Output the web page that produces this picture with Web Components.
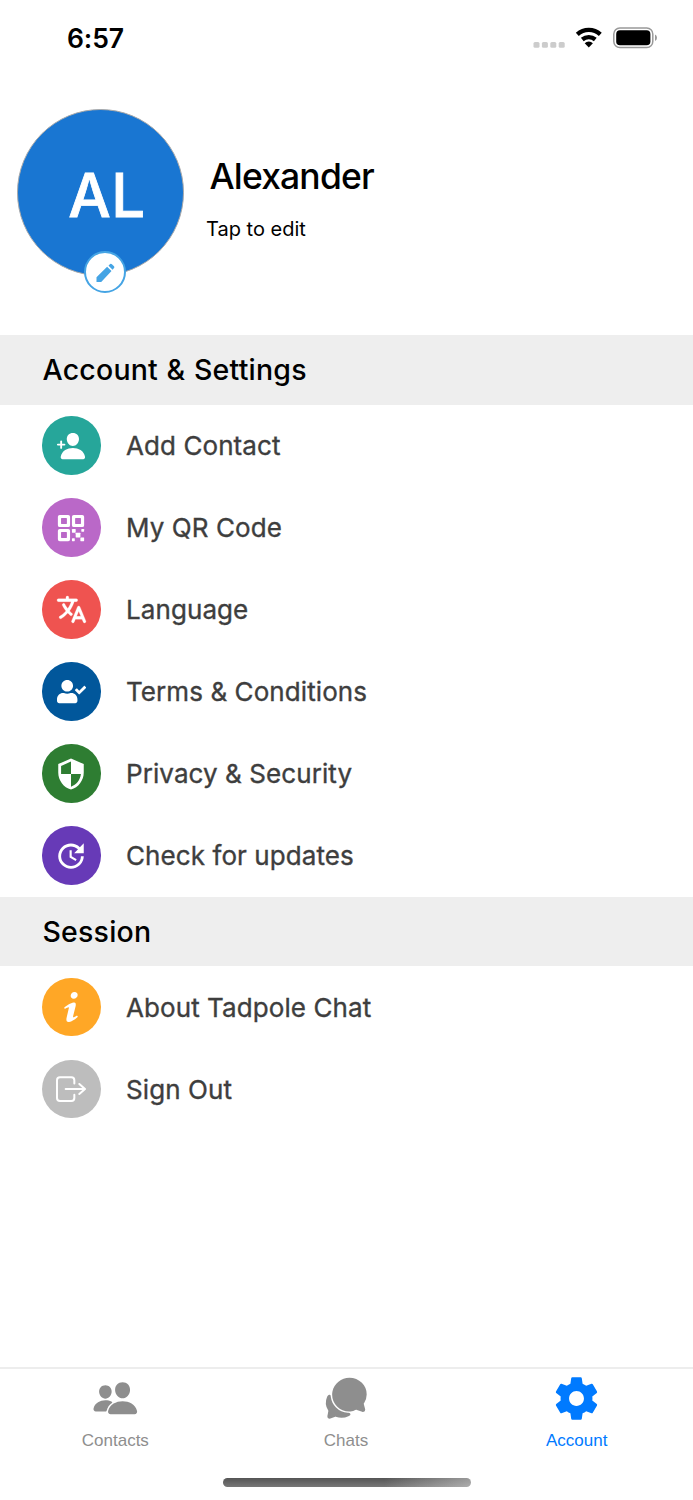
<!DOCTYPE html>
<html lang="en">
<head>
<meta charset="utf-8">
<title>Account</title>
<style>
html,body{margin:0;background:#fff}
body{font-family:Inter,"Liberation Sans",sans-serif;height:1500px;overflow:hidden}
</style>
</head>
<body>
<account-screen></account-screen>
<script>
const ICONS = {
  add: ['0 0 512 512', '<path d="M288 256c52.79 0 99.43-49.71 104-110.82 2.27-30.7-7.36-59.33-27.12-80.6C345.33 43.57 318 32 288 32c-30.24 0-57.59 11.5-77 32.38-19.63 21.11-29.2 49.8-27 80.78C188.49 206.28 235.12 256 288 256zM495.38 439.76c-8.44-46.82-34.79-86.15-76.19-113.75C382.42 301.5 335.83 288 288 288s-94.42 13.5-131.19 38c-41.4 27.6-67.75 66.93-76.19 113.75-1.93 10.73.69 21.34 7.19 29.11A30.94 30.94 0 00112 480h352a30.94 30.94 0 0024.21-11.13c6.48-7.77 9.1-18.38 7.17-29.11zM104 288v-40h40a16 16 0 000-32h-40v-40a16 16 0 00-32 0v40H32a16 16 0 000 32h40v40a16 16 0 0032 0z"/>'],
  qr: ['0 0 512 512', '<rect x="336" y="336" width="80" height="80" rx="8"/><rect x="272" y="272" width="64" height="64" rx="8"/><rect x="416" y="416" width="64" height="64" rx="8"/><rect x="432" y="272" width="48" height="48" rx="8"/><rect x="272" y="432" width="48" height="48" rx="8"/><path id="q" fill-rule="evenodd" d="M448 32H304a32 32 0 00-32 32v144a32 32 0 0032 32h144a32 32 0 0032-32V64a32 32 0 00-32-32zM334 86h84a8 8 0 018 8v84a8 8 0 01-8 8h-84a8 8 0 01-8-8v-84a8 8 0 018-8z"/><use href="#q" x="-240"/><use href="#q" x="-240" y="240"/>'],
  language: ['0 0 512 512', '<path d="M478.33 433.6l-90-218a22 22 0 00-40.67 0l-90 218a22 22 0 1040.67 16.79L316.66 406h102.67l18.33 44.39A22 22 0 00458 464a22 22 0 0020.32-30.4zM334.83 362L368 281.65 401.17 362zM267.84 342.92a22 22 0 00-4.89-30.7c-.2-.15-15-11.13-36.49-34.73 39.65-53.68 62.11-114.75 71.27-143.49H330a22 22 0 000-44H214V70a22 22 0 00-44 0v20H54a22 22 0 000 44h197.25c-9.52 26.95-27.05 69.5-53.79 108.36-31.41-41.68-43.08-68.65-43.17-68.87a22 22 0 00-40.58 17c.58 1.38 14.55 34.23 52.86 83.93.92 1.19 1.83 2.35 2.74 3.51-39.24 44.35-77.74 71.86-93.85 80.74a22 22 0 1021.07 38.63c2.16-1.18 48.6-26.89 101.63-85.59 22.52 24.08 38 35.44 38.93 36.1a22 22 0 0030.75-4.9z" stroke="currentColor" stroke-width="4"/>'],
  terms: ['0 0 640 512', '<path d="M224 256c70.7 0 128-57.3 128-128S294.7 0 224 0 96 57.3 96 128s57.3 128 128 128zm89.6 32h-16.7c-22.2 10.2-46.9 16-72.9 16s-50.6-5.8-72.9-16h-16.7C60.2 288 0 348.2 0 422.4V464c0 26.5 21.5 48 48 48h352c26.5 0 48-21.5 48-48v-41.6c0-74.2-60.2-134.4-134.4-134.4zm323-128.4l-27.8-28.1c-4.6-4.7-12.1-4.7-16.8-.1l-104.8 104-45.5-45.8c-4.6-4.7-12.1-4.7-16.8-.1l-28.1 27.9c-4.7 4.6-4.7 12.1-.1 16.8l81.7 82.3c4.6 4.7 12.1 4.7 16.8.1l141.3-140.2c4.6-4.7 4.7-12.2.1-16.8z"/>'],
  shield: ['0 0 24 24', '<path fill-rule="evenodd" d="M12,12H19C18.47,16.11 15.72,19.78 12,20.92V12H5V6.3L12,3.19M12,1L3,5V11C3,16.55 6.84,21.73 12,23C17.16,21.73 21,16.55 21,11V5L12,1Z"/>'],
  update: ['0 0 24 24', '<path d="M21,10.12H14.22L16.96,7.3C14.23,4.6 9.81,4.5 7.08,7.2C4.35,9.91 4.35,14.28 7.08,17C9.81,19.7 14.23,19.7 16.96,17C18.32,15.65 19,14.08 19,12.1H21C21,14.08 20.12,16.65 18.36,18.39C14.85,21.87 9.15,21.87 5.64,18.39C2.14,14.92 2.11,9.28 5.62,5.81C9.13,2.34 14.76,2.34 18.27,5.81L21,3V10.12M12.5,8V12.25L16,14.33L15.28,15.54L11,13V8H12.5Z"/>'],
  info: ['0 0 20 20', '<path d="M12.432 0c1.34 0 2.01.912 2.01 1.957 0 1.305-1.164 2.512-2.679 2.512-1.269 0-2.009-.75-1.974-1.99C9.789 1.436 10.67 0 12.432 0zM8.309 20c-1.058 0-1.833-.652-1.093-3.524l1.214-5.092c.211-.814.246-1.141 0-1.141-.317 0-1.689.562-2.502 1.117l-.528-.88c2.572-2.186 5.531-3.467 6.801-3.467 1.057 0 1.233 1.273.705 3.23l-1.391 5.352c-.246.945-.141 1.271.106 1.271.317 0 1.357-.392 2.379-1.207l.6.814C12.098 19.02 9.365 20 8.309 20z"/>'],
  exit: ['0 0 90 90', '<path fill="none" stroke="currentColor" stroke-width="6" stroke-linecap="round" stroke-linejoin="round" d="M55 28.500V19Q55 9.500 46 9.500H12Q3 9.500 3 19V72Q3 81 12 81H46Q55 81 55 72V62M70 30L87 45L70 60M29 45H86"/>'],
  people: ['0 0 512 512', '<path d="M336 256c-20.56 0-40.44-9.18-56-25.84-15.13-16.25-24.37-37.92-26-61-1.74-24.62 5.77-47.26 21.14-63.76S312 80 336 80c23.83 0 45.38 9.06 60.7 25.52 15.47 16.62 23 39.22 21.26 63.63-1.67 23.11-10.9 44.77-26 61C376.44 246.82 356.57 256 336 256zM467.83 432H204.18a27.71 27.71 0 01-22-10.67 30.22 30.22 0 01-5.26-25.79c8.42-33.81 29.28-61.85 60.32-81.08C264.79 297.4 299.86 288 336 288c36.85 0 71 9 98.71 26.05 31.11 19.13 52 47.33 60.38 81.55a30.27 30.27 0 01-5.32 25.78A27.68 27.68 0 01467.83 432zM147 260c-35.19 0-66.13-32.72-69-72.93-1.42-20.6 5-39.65 18-53.62 12.86-13.83 31-21.45 51-21.45s38 7.66 50.93 21.57c13.1 14.08 19.5 33.09 18 53.52-2.87 40.2-33.8 72.91-68.93 72.91zM212.66 291.45c-17.59-8.6-40.42-12.9-65.65-12.9-29.46 0-58.07 7.68-80.57 21.62-25.51 15.83-42.67 38.88-49.6 66.71a27.39 27.39 0 004.79 23.36A25.32 25.32 0 0041.72 400h111a8 8 0 007.87-6.57c.11-.63.25-1.26.41-1.88 8.48-34.06 28.35-62.84 57.71-83.82a8 8 0 00-.63-13.39c-1.57-.92-3.37-1.89-5.42-2.89z"/>'],
  chats: ['0 0 512 512', '<path d="M439.9 405.6a26.77 26.77 0 01-9.59-2l-56.78-20.13-.42-.17a9.88 9.88 0 00-3.91-.76 10.32 10.32 0 00-3.62.66c-1.38.52-13.81 5.19-26.85 8.77-7.07 1.94-31.68 8.27-51.43 8.27-50.48 0-97.68-19.4-132.89-54.63A183.38 183.38 0 01100.3 215.1a175.9 175.9 0 014.06-37.58c8.79-40.62 32.07-77.57 65.55-104A194.76 194.76 0 01290.3 30c52.21 0 100.86 20 137 56.18 34.16 34.27 52.88 79.33 52.73 126.87a177.86 177.86 0 01-30.3 99.15l-.19.28-.74 1c-.17.23-.34.45-.5.68l-.15.27a21.63 21.63 0 00-1.08 2.09l15.74 55.94a26.42 26.42 0 011.12 7.11 24 24 0 01-24.03 26.03z"/><path d="M299.87 425.39a15.74 15.74 0 00-10.29-8.1c-5.78-1.53-12.52-1.27-17.67-1.65a201.78 201.78 0 01-128.82-58.75A199.21 199.21 0 0186.4 244.16C85 234.42 85 232 85 232a16 16 0 00-28-10.58s-7.88 8.58-11.6 17.19a162.09 162.09 0 0011 150.06C59 393 59 395 58.42 399.5c-2.73 14.11-7.51 39-10 51.91a24 24 0 008 22.92l.46.39A24.34 24.34 0 0072 480a23.42 23.42 0 009-1.79l53.51-20.65a8.05 8.05 0 015.72 0c21.07 7.84 43 12 63.78 12a176 176 0 0074.91-16.66c5.46-2.56 14-5.34 19-11.12a15 15 0 001.95-16.39z"/>'],
  gear: ['0 0 24 24', '<path d="M19.43 12.98c.04-.32.07-.64.07-.98s-.03-.66-.07-.98l2.11-1.65c.19-.15.24-.42.12-.64l-2-3.46c-.12-.22-.39-.3-.61-.22l-2.49 1c-.52-.4-1.08-.73-1.69-.98l-.38-2.65C14.46 2.18 14.25 2 14 2h-4c-.25 0-.46.18-.49.42l-.38 2.65c-.61.25-1.17.59-1.69.98l-2.49-1c-.23-.09-.49 0-.61.22l-2 3.46c-.13.22-.07.49.12.64l2.11 1.65c-.04.32-.07.65-.07.98s.03.66.07.98l-2.11 1.65c-.19.15-.24.42-.12.64l2 3.46c.12.22.39.3.61.22l2.49-1c.52.4 1.08.73 1.69.98l.38 2.65c.03.24.24.42.49.42h4c.25 0 .46-.18.49-.42l.38-2.65c.61-.25 1.17-.59 1.69-.98l2.49 1c.23.09.49 0 .61-.22l2-3.46c.12-.22.07-.49-.12-.64l-2.11-1.65zM12 15.5c-1.93 0-3.5-1.57-3.5-3.5s1.57-3.5 3.5-3.5 3.5 1.57 3.5 3.5-1.57 3.5-3.5 3.5z"/>'],
  pencil: ['0 0 24 24', '<path d="M3.500 21.900V17.200L14.100 6.800L18.500 11.100L8.200 21.900ZM15.500 5.700L17.100 4.100Q18 3.300 18.900 4.200L21 6.300Q21.900 7.200 21 8.100L19.600 9.700Z"/>']
};
const define = (name, html, fill) => customElements.define(name, class extends HTMLElement {
  constructor() {
    super();
    const t = document.createElement('template');
    t.innerHTML = html;
    this.attachShadow({mode: 'open'}).append(t.content.cloneNode(true));
  }
  connectedCallback() { if (fill) fill(this, this.shadowRoot); }
});

define('ui-icon', '<style>:host{display:block;flex:none}svg{display:block;width:100%;height:100%;fill:currentColor}</style><svg></svg>', (el, root) => {
  const [box, art] = ICONS[el.getAttribute('name')];
  const svg = root.querySelector('svg');
  svg.setAttribute('viewBox', box);
  svg.innerHTML = art;
  const size = el.getAttribute('size');
  el.style.width = el.style.height = size + 'px';
});

define('status-bar', `<style>
:host{display:flex;justify-content:space-between;height:76px;box-sizing:border-box;padding:0 36px 0 67px}
time{font-size:26.5px;font-weight:600;line-height:76px;letter-spacing:-.1px}
svg{display:block;margin-top:20px}
</style><time>6:57</time>
<svg width="126" height="36" viewBox="531 20 126 36">
<g fill="#ccc"><rect x="533.500" y="42" width="6" height="5.800" rx="1.500"/><rect x="541.900" y="42" width="6" height="5.800" rx="1.500"/><rect x="550.300" y="42" width="6" height="5.800" rx="1.500"/><rect x="558.700" y="42" width="6" height="5.800" rx="1.500"/></g>
<g fill="none" stroke="#000" stroke-width="4.300"><path d="M577.300 34.300A17 17 0 01600.300 34.300"/><path d="M582.300 39.500A10 10 0 01595.300 39.500"/></g>
<path d="M588.800 47.500l-4.100-4.300a6 6 0 018.200 0z"/>
<rect x="613.800" y="28" width="39" height="19.500" rx="6" fill="none" stroke="#999" stroke-width="1.500"/>
<rect x="616.200" y="30.300" width="34.200" height="14.900" rx="3.800"/>
<path d="M655 34.500q2 1 2 3.300t-2 3.300z" fill="#999"/>
</svg>`);

define('profile-header', `<style>
:host{display:flex;height:259px;box-sizing:border-box;padding:33px 0 0 17px}
.avatar{position:relative;width:167px;height:167px;box-sizing:border-box;border:1px solid #aaa;border-radius:50%;background:#1976d2;color:#fff;display:flex;align-items:center;justify-content:center;font-size:60px;font-weight:500;line-height:1;letter-spacing:.5px;-webkit-text-stroke:.8px #fff}
.avatar span{margin:4px 0 0 13px}
.edit{position:absolute;left:66px;top:141px;width:42px;height:42px;box-sizing:border-box;border:2px solid #45a4e4;border-radius:50%;background:#fff;color:#45a4e4;display:flex;align-items:center;justify-content:center}
.text{margin:45px 0 0 22px}
h1{margin:0 0 0 3.500px;font-size:35.500px;line-height:46px;font-weight:500;letter-spacing:-.85px}
p{margin:16px 0 0;font-size:20px;line-height:26px}
</style><div class="avatar"><span><slot name="initials"></slot></span><div class="edit"><ui-icon name="pencil" size="24"></ui-icon></div></div>
<div class="text"><h1><slot name="name"></slot></h1><p><slot></slot></p></div>`);

define('section-title', `<style>
:host{display:block;height:69.500px;background:#eee;padding-left:42.500px;font-size:28.500px;font-weight:500;line-height:70px;letter-spacing:.2px;word-spacing:.8px}
</style><slot></slot>`);

define('menu-row', `<style>
:host{display:flex;align-items:center;height:82px;padding-left:42px;gap:25.500px;color:#3e3e3e;font-size:26px;font-weight:400;letter-spacing:.08px;-webkit-text-stroke:.35px #3e3e3e;white-space:nowrap}
.dot{width:58.500px;height:58.500px;border-radius:50%;color:#fff;display:flex;align-items:center;justify-content:center;flex:none}
</style><div class="dot"></div><span><slot></slot></span>`, (el, root) => {
  const dot = root.querySelector('.dot');
  dot.style.background = el.getAttribute('color');
  dot.innerHTML = '<ui-icon name="' + el.getAttribute('icon') + '" size="' + (el.getAttribute('size') || 30) + '"></ui-icon>';
});

define('tab-item', `<style>
:host{flex:1;display:flex;flex-direction:column;align-items:center;color:#8e8e8e;font:17px/20px "Liberation Sans",Arial,sans-serif}
:host([active]){color:#007aff}
.icon{height:58px;display:flex;align-items:center;margin-bottom:4px}
</style><div class="icon"></div><span><slot></slot></span>`, (el, root) => {
  root.querySelector('.icon').innerHTML = '<ui-icon name="' + el.getAttribute('icon') + '" size="' + el.getAttribute('size') + '"></ui-icon>';
});

define('tab-bar', `<style>
:host{display:flex;flex-direction:column;align-items:center;height:133px;box-sizing:border-box;border-top:2px solid #ededed}
nav{display:flex;width:692px;height:109px;align-self:flex-start}
i{display:block;width:248px;height:8.500px;border-radius:5px;background:linear-gradient(to bottom,transparent,#fff3),linear-gradient(90deg,#555 65%,#999)}
</style><nav><slot></slot></nav><i></i>`);

define('account-screen', `<style>
:host{display:flex;flex-direction:column;width:693px;height:1500px;background:#fff;color:#000}
main{flex:1}
</style>
<status-bar></status-bar>
<main>
<profile-header><span slot="initials">AL</span><span slot="name">Alexander</span>Tap to edit</profile-header>
<section-title>Account &amp; Settings</section-title>
<menu-row icon="add" color="#26a69a">Add Contact</menu-row>
<menu-row icon="qr" color="#ba68c8">My QR Code</menu-row>
<menu-row icon="language" color="#ef5350" size="33">Language</menu-row>
<menu-row icon="terms" color="#01579b" size="29.200">Terms &amp; Conditions</menu-row>
<menu-row icon="shield" color="#2e7d32" size="34">Privacy &amp; Security</menu-row>
<menu-row icon="update" color="#673ab7" size="34">Check for updates</menu-row>
<section-title>Session</section-title>
<menu-row icon="info" color="#ffa726">About Tadpole Chat</menu-row>
<menu-row icon="exit" color="#bdbdbd">Sign Out</menu-row>
</main>
<tab-bar><tab-item icon="people" size="46.600">Contacts</tab-item><tab-item icon="chats" size="46.600">Chats</tab-item><tab-item icon="gear" size="51" active>Account</tab-item></tab-bar>`);
</script>
</body>
</html>
